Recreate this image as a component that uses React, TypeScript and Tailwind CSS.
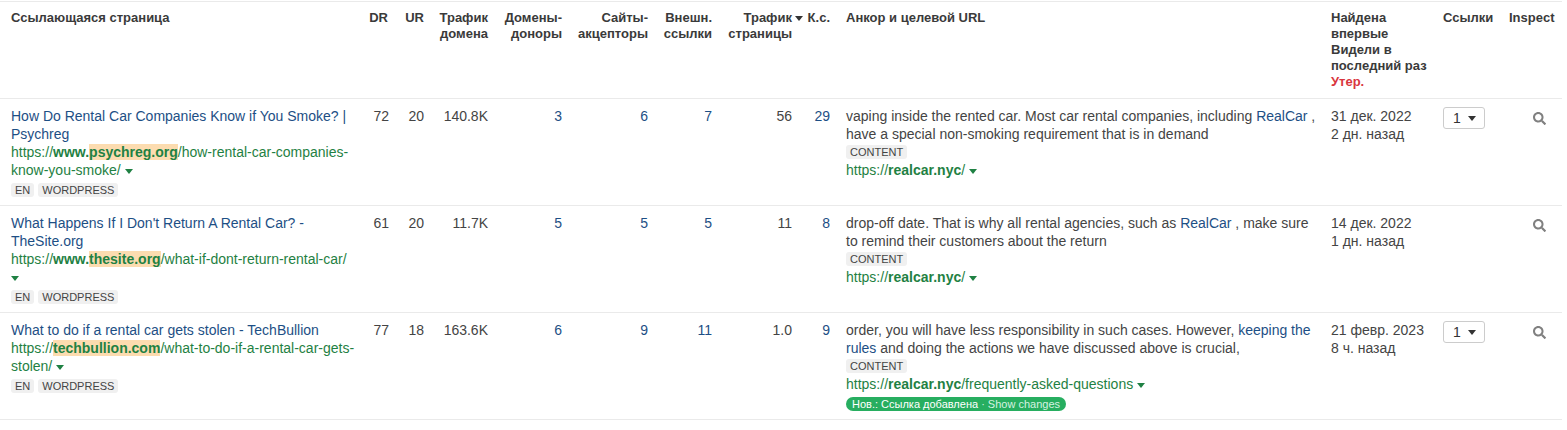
import React from "react";
import { FaSearch } from "react-icons/fa";

interface Backlink {
  title: string;
  urlHead: string;
  urlBold: string;
  urlMark: string;
  urlTail: string;
  dr: number;
  ur: number;
  domainTraffic: string;
  domains: number;
  sites: number;
  external: number;
  pageTraffic: string;
  kw: number;
  anchor: React.ReactNode;
  targetTail: string;
  first: string;
  last: string;
  links: boolean;
  isNew?: boolean;
}

const rows: Backlink[] = [
  {
    title: "How Do Rental Car Companies Know if You Smoke? | Psychreg",
    urlHead: "https://",
    urlBold: "www.",
    urlMark: "psychreg.org",
    urlTail: "/how-rental-car-companies-know-you-smoke/",
    dr: 72,
    ur: 20,
    domainTraffic: "140.8K",
    domains: 3,
    sites: 6,
    external: 7,
    pageTraffic: "56",
    kw: 29,
    anchor: (
      <>
        vaping inside the rented car. Most car rental companies, including{" "}
        <a className="text-[#1d4f85]">RealCar</a> , have a special non-smoking requirement that is in demand
      </>
    ),
    targetTail: "/",
    first: "31 дек. 2022",
    last: "2 дн. назад",
    links: true,
  },
  {
    title: "What Happens If I Don't Return A Rental Car? - TheSite.org",
    urlHead: "https://",
    urlBold: "www.",
    urlMark: "thesite.org",
    urlTail: "/what-if-dont-return-rental-car/",
    dr: 61,
    ur: 20,
    domainTraffic: "11.7K",
    domains: 5,
    sites: 5,
    external: 5,
    pageTraffic: "11",
    kw: 8,
    anchor: (
      <>
        drop-off date. That is why all rental agencies, such as{" "}
        <a className="text-[#1d4f85]">RealCar</a> , make sure to remind their customers about the return
      </>
    ),
    targetTail: "/",
    first: "14 дек. 2022",
    last: "1 дн. назад",
    links: false,
  },
  {
    title: "What to do if a rental car gets stolen - TechBullion",
    urlHead: "https://",
    urlBold: "",
    urlMark: "techbullion.com",
    urlTail: "/what-to-do-if-a-rental-car-gets-stolen/",
    dr: 77,
    ur: 18,
    domainTraffic: "163.6K",
    domains: 6,
    sites: 9,
    external: 11,
    pageTraffic: "1.0",
    kw: 9,
    anchor: (
      <>
        order, you will have less responsibility in such cases. However,{" "}
        <a className="text-[#1d4f85]">keeping the rules</a> and doing the actions we have discussed above is crucial,
      </>
    ),
    targetTail: "/frequently-asked-questions",
    first: "21 февр. 2023",
    last: "8 ч. назад",
    links: true,
    isNew: true,
  },
];

// little down triangle used next to urls and in the header
const Caret = ({ className }: { className: string }) => (
  <svg width="8" height="5" viewBox="0 0 8 5" className={`inline-block ${className}`}>
    <path d="M0 0h8L4 5z" fill="currentColor" />
  </svg>
);

const Tag = ({ children }: { children: React.ReactNode }) => (
  <span className="inline-flex h-[14px] items-center rounded-[3px] bg-[#f0f0f0] px-1 text-[11px] leading-[14px] text-[#444]">
    {children}
  </span>
);

const thClass = "pt-2 pb-0 pr-2 align-top font-bold text-[13px] leading-4 text-[#3a3a3a]";
const tdClass = "pt-2 pb-2 pr-2 align-top";

export default function App() {
  return (
    <div className="w-[1567px] bg-white pt-px font-['Liberation_Sans',Arial,sans-serif] text-[14px] leading-[18px] text-[#444]">
      <table className="w-[1562px] table-fixed border-collapse">
        <colgroup>
          <col className="w-[360px]" />
          <col className="w-[37px]" />
          <col className="w-[35px]" />
          <col className="w-[65px]" />
          <col className="w-[73px]" />
          <col className="w-[86px]" />
          <col className="w-[64px]" />
          <col className="w-[86px]" />
          <col className="w-[32px]" />
          <col className="w-[485px]" />
          <col className="w-[113px]" />
          <col className="w-[65px]" />
          <col className="w-[61px]" />
        </colgroup>
        <thead>
          <tr className="h-[97px] border-y border-[#eaeaea]">
            <th className={`${thClass} pl-[11px] text-left`}>Ссылающаяся страница</th>
            <th className={`${thClass} !pr-[9px] text-right`}>DR</th>
            <th className={`${thClass} text-right`}>UR</th>
            <th className={`${thClass} !pr-[9px] text-right`}>
              Трафик
              <br />
              домена
            </th>
            <th className={`${thClass} text-right`}>
              Домены-
              <br />
              доноры
            </th>
            <th className={`${thClass} text-right`}>
              Сайты-
              <br />
              акцепторы
            </th>
            <th className={`${thClass} text-right`}>
              Внешн.
              <br />
              ссылки
            </th>
            <th className={`${thClass} relative !pr-[14px] text-right`}>
              Трафик
              <Caret className="absolute right-[3px] top-[14px] text-[#333]" />
              <br />
              страницы
            </th>
            <th className={`${thClass} whitespace-nowrap text-right`}>К.с.</th>
            <th className={`${thClass} pl-2 text-left`}>Анкор и целевой URL</th>
            <th className={`${thClass} pl-2 text-left`}>
              Найдена впервые
              <br />
              Видели в последний раз
              <br />
              <span className="text-[#d9363e]">Утер.</span>
            </th>
            <th className={`${thClass} pl-[7px] text-left`}>Ссылки</th>
            <th className={`${thClass} pl-2 !pr-0 text-left`}>Inspect</th>
          </tr>
        </thead>
        <tbody>
          {rows.map((row) => (
            <tr key={row.title} className="border-b border-[#eaeaea]">
              <td className={`${tdClass} pl-[11px] !pr-[5px]`}>
                <a className="text-[#1d4f85]">{row.title}</a>
                <div className="text-[#1f8143]">
                  {row.urlHead}
                  <b>{row.urlBold}</b>
                  <b className="bg-[#fcdcb0]">{row.urlMark}</b>
                  {row.urlTail} <Caret className="align-[1px]" />
                </div>
                <div className="mt-1 flex gap-1">
                  <Tag>EN</Tag>
                  <Tag>WORDPRESS</Tag>
                </div>
              </td>
              <td className={`${tdClass} text-right`}>{row.dr}</td>
              <td className={`${tdClass} text-right`}>{row.ur}</td>
              <td className={`${tdClass} !pr-[9px] text-right`}>{row.domainTraffic}</td>
              <td className={`${tdClass} text-right text-[#1d4f85]`}>{row.domains}</td>
              <td className={`${tdClass} text-right text-[#1d4f85]`}>{row.sites}</td>
              <td className={`${tdClass} text-right text-[#1d4f85]`}>{row.external}</td>
              <td className={`${tdClass} !pr-[14px] text-right`}>{row.pageTraffic}</td>
              <td className={`${tdClass} text-right text-[#1d4f85]`}>{row.kw}</td>
              <td className={`${tdClass} pl-2 !pr-1`}>
                <div>{row.anchor}</div>
                <div className="flex h-[18px] items-center">
                  <Tag>CONTENT</Tag>
                </div>
                <div className="text-[#1f8143]">
                  https://<b>realcar.nyc</b>
                  {row.targetTail} <Caret className="align-[1px]" />
                </div>
                {row.isNew && (
                  <div className="mt-1 flex">
                    <span className="flex h-[14px] items-center rounded-full bg-[#27ae60] px-[6px] text-[11px] leading-[14px] text-white">
                      Нов.: Ссылка добавлена
                      <span className="text-[#d5f2e0]">&nbsp;· Show changes</span>
                    </span>
                  </div>
                )}
              </td>
              <td className={`${tdClass} pl-2`}>
                {row.first}
                <br />
                {row.last}
              </td>
              <td className={`${tdClass} pl-[7px]`}>
                {row.links && (
                  <div className="flex h-[22px] w-[42px] items-center rounded-[3px] border border-[#ccc] pl-[9px] text-[#333]">
                    1
                    <Caret className="ml-[7px] text-[#333]" />
                  </div>
                )}
              </td>
              <td className={`${tdClass} !pr-0`}>
                <div className="flex h-[22px] items-center pl-[32px]">
                  <FaSearch className="text-[13px] text-[#808080]" />
                </div>
              </td>
            </tr>
          ))}
        </tbody>
      </table>
    </div>
  );
}
